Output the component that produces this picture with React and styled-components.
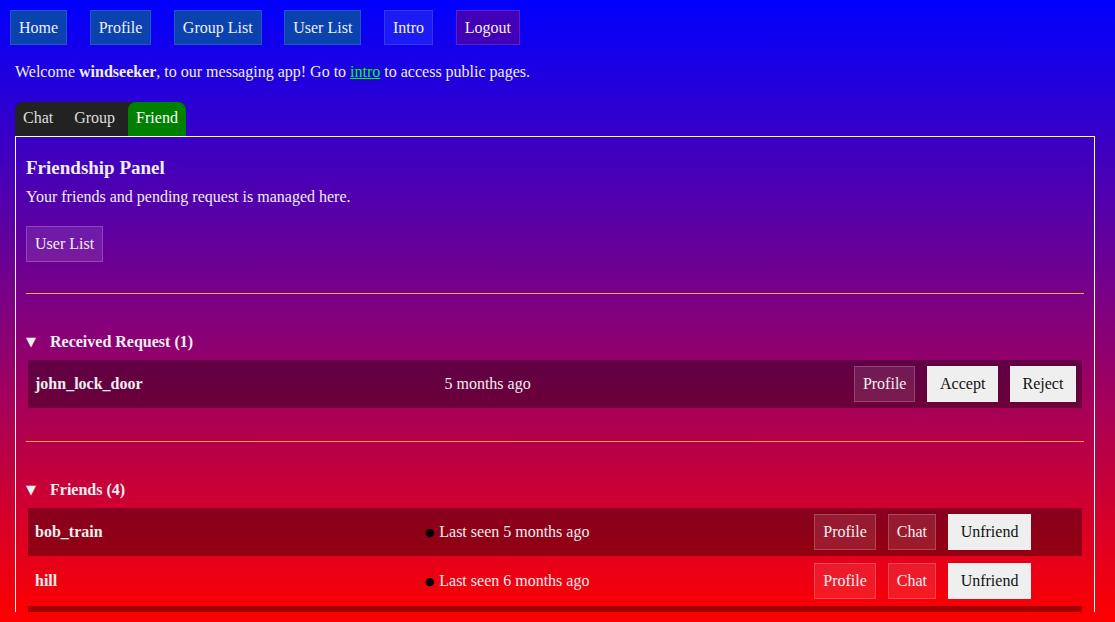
import React from 'react'
import styled, { createGlobalStyle } from 'styled-components'

const GlobalStyle = createGlobalStyle`
  html, body {
    margin: 0;
    padding: 0;
  }
  body {
    font-family: "Liberation Serif", "Times New Roman", serif;
    font-size: 16px;
    color: #eeeeee;
  }
`

const Page = styled.div`
  height: 100vh;
  box-sizing: border-box;
  padding: 10px;
  background: linear-gradient(to bottom, #0000ff, #ff0000);
  display: flex;
  flex-direction: column;
`

const Scroll = styled.div`
  flex: 1;
  overflow: hidden;
`

const Nav = styled.nav`
  display: flex;
  gap: 22.6px;
`

const NavButton = styled.button`
  font: inherit;
  font-size: 16px;
  height: 35px;
  padding: 0 8px;
  color: #f0f0f0;
  background: ${({ $variant }) =>
    $variant === 'intro' ? '#1b1bf3' : $variant === 'logout' ? '#4200b9' : '#0a42b0'};
  border: 1px solid
    ${({ $variant }) =>
      $variant === 'intro' ? '#3636f2' : $variant === 'logout' ? '#5722c6' : '#2656c2'};
  cursor: pointer;
`

const Main = styled.div`
  margin: 0 10px 0 5px;
`

const Welcome = styled.p`
  margin: 18px 0 21px;
  line-height: 18px;

  a {
    color: #00ff00;
  }
`

const Tabs = styled.div`
  display: inline-flex;
  gap: 5px;
  background: #222222;
  border-radius: 8px 8px 0 0;
  vertical-align: bottom;
`

const Tab = styled.div`
  padding: 7px 8px 9px;
  line-height: 18px;
  color: ${({ $active }) => ($active ? '#ffffff' : '#dddddd')};
  background: ${({ $active }) => ($active ? '#008000' : 'transparent')};
  border-radius: 8px 8px 0 0;
  cursor: pointer;
`

const Panel = styled.section`
  border: 1px solid #ffffff;
  padding: 0 10px 40px;
`

const Title = styled.h3`
  margin: 0;
  padding-top: 20px;
  font-size: 19px;
  line-height: 21px;
`

const Intro = styled.p`
  margin: 10px 0 20px;
  line-height: 18px;
`

const GhostButton = styled.button`
  font: inherit;
  font-size: 16px;
  height: 36px;
  padding: 0 8px;
  color: #f0f0f0;
  background: rgba(255, 255, 255, 0.1);
  border: 1px solid rgba(255, 255, 255, 0.2);
  cursor: pointer;
`

const LightButton = styled.button`
  font: inherit;
  font-size: 16px;
  height: 36px;
  padding: 0 12.6px;
  color: #111111;
  background: #efefef;
  border: none;
  cursor: pointer;
`

const Divider = styled.hr`
  margin: ${({ $top }) => $top}px 0 0;
  border: none;
  border-top: 1px solid #f9a63a;
`

const Section = styled.div`
  padding-top: 39px;
`

const Summary = styled.div`
  display: flex;
  align-items: center;
  gap: 12px;
  font-weight: bold;
  line-height: 18px;
  margin-bottom: 7px;
`

const Marker = styled.span`
  font-family: "DejaVu Sans", sans-serif;
  font-size: 13px;
  width: 12px;
`

const List = styled.div`
  display: flex;
  flex-direction: column;
  gap: 1px;
  padding: 2px;
`

const Row = styled.div`
  display: grid;
  grid-template-columns: ${({ $cols }) => $cols};
  align-items: center;
  background: ${({ $dark }) => ($dark ? 'rgba(0, 0, 0, 0.35)' : 'transparent')};
  min-height: 48px;
`

const Cell = styled.div`
  padding: 6px 7px;
  display: flex;
  align-items: center;
  gap: 12px;
`

const Actions = styled(Cell)`
  padding-right: ${({ $end }) => ($end ? '6px' : '7px')};
`

const Name = styled(Cell)`
  font-weight: bold;
`

const Dot = styled.span`
  color: #000000;
  font-family: "DejaVu Sans", sans-serif;
  font-size: 11px;
  margin-right: 5px;
  vertical-align: 1px;
`

const received = [{ name: 'john_lock_door', when: '5 months ago' }]

const friends = [
  { name: 'bob_train', seen: 'Last seen 5 months ago' },
  { name: 'hill', seen: 'Last seen 6 months ago' },
  { name: 'carl', seen: 'Last seen 6 months ago' },
  { name: 'dora', seen: 'Last seen 7 months ago' },
]

const App = () => {
  return (
    <>
      <GlobalStyle />
      <Page>
        <Scroll>
          <Nav>
            <NavButton>Home</NavButton>
            <NavButton>Profile</NavButton>
            <NavButton>Group List</NavButton>
            <NavButton>User List</NavButton>
            <NavButton $variant="intro">Intro</NavButton>
            <NavButton $variant="logout">Logout</NavButton>
          </Nav>
          <Main>
            <Welcome>
              Welcome <b>windseeker</b>, to our messaging app! Go to <a href="#intro">intro</a> to
              access public pages.
            </Welcome>
            <Tabs>
              <Tab>Chat</Tab>
              <Tab>Group</Tab>
              <Tab $active>Friend</Tab>
            </Tabs>
            <Panel>
              <Title>Friendship Panel</Title>
              <Intro>Your friends and pending request is managed here.</Intro>
              <GhostButton>User List</GhostButton>

              <Divider $top={31} />
              <Section>
                <Summary>
                  <Marker>▼</Marker>
                  Received Request ({received.length})
                </Summary>
                <List>
                  {received.map((r, i) => (
                    <Row key={r.name} $cols="1fr 1fr auto" $dark={i % 2 === 0}>
                      <Name>{r.name}</Name>
                      <Cell>{r.when}</Cell>
                      <Actions $end>
                        <GhostButton>Profile</GhostButton>
                        <LightButton>Accept</LightButton>
                        <LightButton>Reject</LightButton>
                      </Actions>
                    </Row>
                  ))}
                </List>
              </Section>

              <Divider $top={31} />
              <Section>
                <Summary>
                  <Marker>▼</Marker>
                  Friends ({friends.length})
                </Summary>
                <List>
                  {friends.map((f, i) => (
                    <Row key={f.name} $cols="1fr 1fr auto 44px" $dark={i % 2 === 0}>
                      <Name>{f.name}</Name>
                      <Cell>
                        <span>
                          <Dot>●</Dot>
                          {f.seen}
                        </span>
                      </Cell>
                      <Actions>
                        <GhostButton>Profile</GhostButton>
                        <GhostButton>Chat</GhostButton>
                        <LightButton>Unfriend</LightButton>
                      </Actions>
                      <Cell />
                    </Row>
                  ))}
                </List>
              </Section>
            </Panel>
          </Main>
        </Scroll>
      </Page>
    </>
  )
}

export default App
